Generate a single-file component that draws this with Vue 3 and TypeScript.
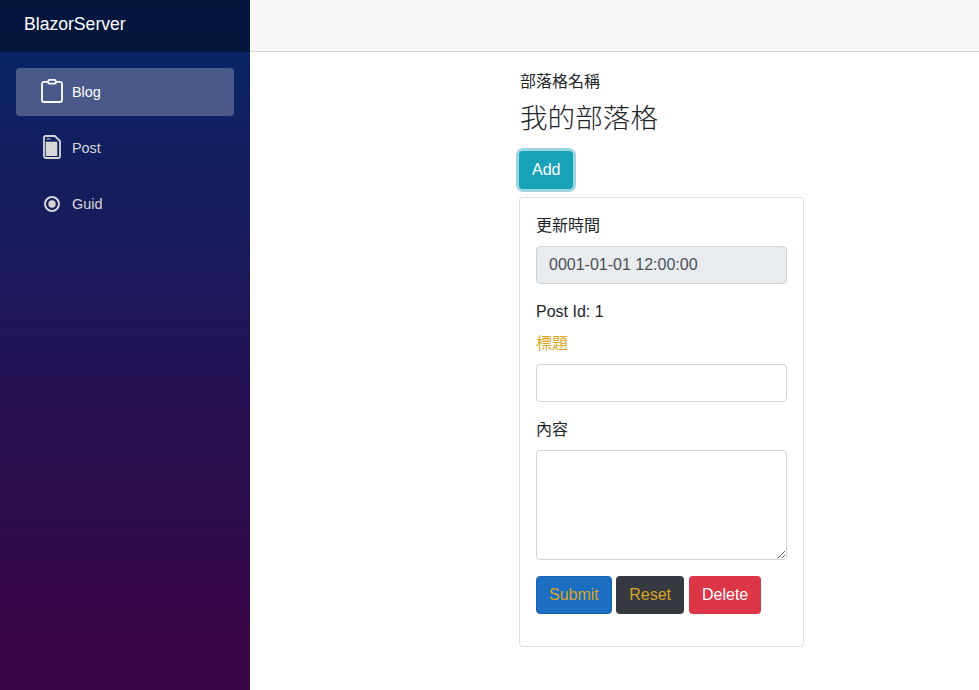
<script setup lang="ts">
import { ref } from 'vue'

const blogName = ref('我的部落格')
const updatedAt = ref('0001-01-01 12:00:00')
const postId = ref(1)
const title = ref('')
const content = ref('')

const navItems = [
    { label: 'Blog', icon: 'clipboard', active: true },
    { label: 'Post', icon: 'file', active: false },
    { label: 'Guid', icon: 'target', active: false },
]
</script>

<template>
    <div class="page">
        <aside class="sidebar">
            <div class="brand-row">
                <a class="brand">BlazorServer</a>
            </div>
            <nav class="nav">
                <a v-for="item in navItems" :key="item.label" class="nav-link" :class="{ active: item.active }">
                    <span class="nav-icon">
                        <svg v-if="item.icon === 'clipboard'" class="lift" width="22" height="24" viewBox="0 0 22 24" fill="none" stroke="currentColor" stroke-width="1.8">
                            <path d="M7 2.800H3a2 2 0 0 0-2 2V21a2 2 0 0 0 2 2h16a2 2 0 0 0 2-2V4.800a2 2 0 0 0-2-2H15" />
                            <rect x="7.200" y="0.900" width="7.600" height="3.800" rx="1.400" />
                        </svg>
                        <svg v-else-if="item.icon === 'file'" class="lift" width="18" height="24" viewBox="0 0 18 24">
                            <path d="M2.500 1h9.300L17 6.200V21a2 2 0 0 1-2 2H3a2 2 0 0 1-2-2V2.500A1.500 1.500 0 0 1 2.500 1z" fill="none" stroke="currentColor" stroke-width="1.800" />
                            <rect x="2.700" y="6.700" width="11.600" height="14.300" fill="currentColor" />
                            <path d="M3.500 4h4" stroke="currentColor" stroke-width="1" />
                        </svg>
                        <svg v-else width="16" height="16" viewBox="0 0 16 16">
                            <circle cx="8" cy="8" r="7" fill="none" stroke="currentColor" stroke-width="2" />
                            <circle cx="8" cy="8" r="3.700" fill="currentColor" />
                        </svg>
                    </span>
                    {{ item.label }}
                </a>
            </nav>
        </aside>

        <div class="main">
            <div class="top-row"></div>
            <div class="content">
                <div class="blog-label">部落格名稱</div>
                <h3 class="blog-name">{{ blogName }}</h3>
                <button class="btn btn-info">Add</button>
                <div class="card">
                    <div class="field">
                        <label>更新時間</label>
                        <input class="form-control" :value="updatedAt" disabled />
                    </div>
                    <div class="post-id">Post Id: {{ postId }}</div>
                    <div class="field">
                        <label class="warn">標題</label>
                        <input v-model="title" class="form-control" />
                    </div>
                    <div class="field">
                        <label>內容</label>
                        <textarea v-model="content" class="form-control area"></textarea>
                    </div>
                    <div class="actions">
                        <button class="btn btn-primary warn">Submit</button>
                        <button class="btn btn-dark warn">Reset</button>
                        <button class="btn btn-danger">Delete</button>
                    </div>
                </div>
            </div>
        </div>
    </div>
</template>

<style>
html, body {
    margin: 0;
    background: #fff;
}
</style>

<style scoped>
.page {
    display: flex;
    height: 690px;
    overflow: hidden;
    font-family: "Liberation Sans", "Noto Sans CJK TC", sans-serif;
    font-size: 16px;
    line-height: 24px;
    color: #212529;
}

.sidebar {
    width: 250px;
    flex: none;
    background-image: linear-gradient(180deg, #052767 0%, #3a0647 92%);
}

.brand-row {
    height: 52px;
    display: flex;
    align-items: center;
    padding: 0 0 4px 24px;
    box-sizing: border-box;
    background: rgba(0, 0, 0, 0.4);
}

.brand {
    color: #fff;
    font-size: 17.6px;
}

.nav {
    padding: 16px 16px 0;
    display: flex;
    flex-direction: column;
    gap: 8px;
}

.nav-link {
    height: 48px;
    display: flex;
    align-items: center;
    border-radius: 4px;
    color: #d7d7d7;
    font-size: 14.4px;
}

.nav-link.active {
    background: rgba(255, 255, 255, 0.25);
    color: #fff;
}

.nav-icon {
    width: 56px;
    flex: none;
    display: flex;
    justify-content: center;
    padding-left: 16px;
    box-sizing: border-box;
}

.lift {
    margin-top: -2px;
}

.main {
    flex: 1;
    min-width: 0;
}

.top-row {
    height: 51px;
    background: #f7f7f7;
    border-bottom: 1px solid #d6d5d5;
}

.content {
    width: 285px;
    margin-left: 269px;
    padding-top: 18px;
}

.blog-label {
    padding-left: 1px;
}

.blog-name {
    margin: 8px 0 15px 1px;
    font-size: 27.6px;
    line-height: 34px;
    font-weight: 300;
}

.btn {
    display: inline-block;
    height: 38px;
    padding: 0 12px;
    border: 1px solid transparent;
    border-radius: 4px;
    font: inherit;
    color: #fff;
}

.btn-info {
    background: #17a2b8;
    box-shadow: 0 0 0 3px rgba(58, 176, 195, 0.5);
}

.btn-primary {
    background: #1b6ec2;
    border-color: #1861ac;
}

.btn-dark {
    background: #343a40;
}

.btn-danger {
    background: #dc3545;
    margin-left: 0.5px;
}

.warn.warn {
    color: #daa520;
}

.card {
    box-sizing: border-box;
    height: 450px;
    margin-top: 8px;
    padding: 16px;
    background: #fff;
    border: 1px solid rgba(0, 0, 0, 0.125);
    border-radius: 4px;
}

.field {
    margin-bottom: 16px;
}

label {
    display: block;
    margin-bottom: 8px;
}

.form-control {
    display: block;
    box-sizing: border-box;
    width: 100%;
    height: 38px;
    padding: 6px 12px;
    border: 1px solid #ced4da;
    border-radius: 4px;
    background: #fff;
    font: inherit;
    color: #495057;
    outline: none;
}

.form-control:disabled {
    background: #e9ecef;
    opacity: 1;
}

.area {
    height: 110px;
}

.post-id {
    margin-bottom: 8px;
}

.actions {
    display: flex;
    gap: 4.45px;
}
</style>
